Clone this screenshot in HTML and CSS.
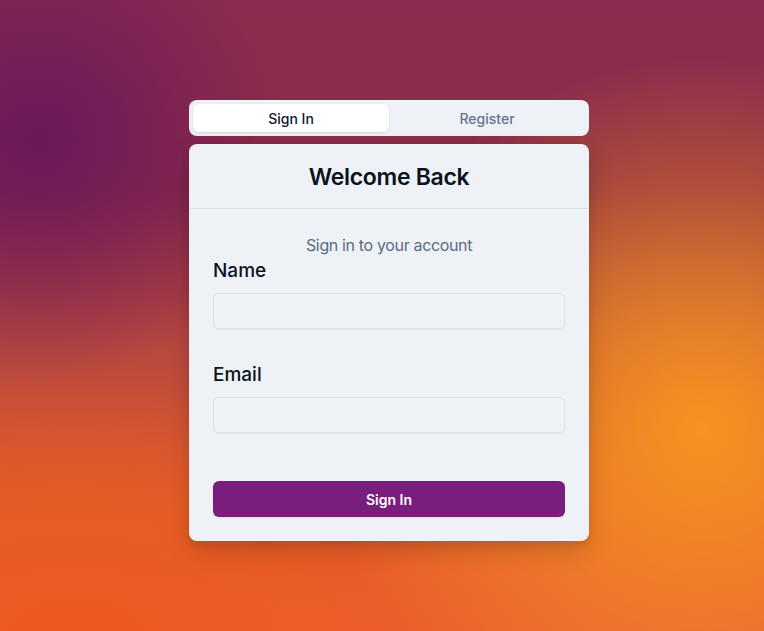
FILE: index.html
```html
<!DOCTYPE html>
<html>
<head>
<meta charset="utf-8">
<link rel="stylesheet" href="styles.css">
</head>
<body>
<div class="page">
  <div class="wrap">
    <div class="tabs">
      <button class="tab active">Sign In</button>
      <button class="tab">Register</button>
    </div>
    <div class="card">
      <div class="card-header">
        <h1 class="title">Welcome Back</h1>
      </div>
      <div class="card-body">
        <p class="subtitle">Sign in to your account</p>
        <div class="field">
          <label class="label">Name</label>
          <input class="input" type="text">
        </div>
        <div class="field field-gap">
          <label class="label">Email</label>
          <input class="input" type="email">
        </div>
        <button class="submit">Sign In</button>
      </div>
    </div>
  </div>
</div>
</body>
</html>
```
FILE: styles.css
```css
* { box-sizing: border-box; }
html, body { margin: 0; padding: 0; height: 100%; }
body {
  font-family: Inter, "Noto Sans", sans-serif;
  background-color: #c2473a;
  background-image:
    radial-gradient(circle at 5% 22%, rgba(104,22,92,0.9) 0%, rgba(104,22,92,0) 28%),
    radial-gradient(circle at 92% 68%, rgba(245,148,32,1) 0%, rgba(245,148,32,0) 45%),
    radial-gradient(ellipse 70% 40% at 10% 100%, rgba(236,90,32,1) 0%, rgba(236,90,32,0) 100%),
    radial-gradient(ellipse 60% 40% at 100% 100%, rgba(232,90,55,1) 0%, rgba(232,90,55,0) 100%),
    linear-gradient(180deg, #8b2d50 0%, #8c2c48 30%, #b8483f 55%, #e05e2c 80%, #eb5e30 100%);
}
.page {
  height: 631px;
  display: flex;
  justify-content: center;
  padding-top: 100px;
  padding-left: 14px;
}
.wrap {
  width: 400px;
  display: flex;
  flex-direction: column;
  gap: 8px;
}
.tabs {
  height: 36px;
  background: #eef2f7;
  border-radius: 8px;
  padding: 4px;
  display: grid;
  grid-template-columns: 1fr 1fr;
}
.tab {
  border: 0;
  background: transparent;
  font-family: inherit;
  font-size: 14px;
  font-weight: 500;
  color: #64748b;
  border-radius: 6px;
  padding: 0;
  height: 28px;
}
.tab.active {
  background: #fff;
  color: #0f172a;
  box-shadow: 0 1px 3px rgba(0,0,0,0.12);
}
.card {
  background: #eef2f7;
  border-radius: 8px;
  box-shadow: 0 10px 25px rgba(0,0,0,0.15), 0 4px 8px rgba(0,0,0,0.08);
}
.card-header {
  height: 65px;
  padding-top: 1px;
  border-bottom: 1px solid #dde3ea;
  display: flex;
  align-items: center;
  justify-content: center;
}
.title {
  margin: 0;
  font-size: 23px;
  line-height: 32px;
  font-weight: 600;
  color: #0b1220;
  letter-spacing: -0.3px;
}
.card-body {
  padding: 24px 24px 24px;
  display: flex;
  flex-direction: column;
}
.subtitle {
  margin: 0;
  text-align: center;
  font-size: 16px;
  line-height: 24px;
  color: #5b6b82;
  letter-spacing: -0.35px;
}
.field {
  display: flex;
  flex-direction: column;
  gap: 8px;
}
.field-gap { margin-top: 32px; }
.label {
  font-size: 19px;
  line-height: 28px;
  font-weight: 500;
  color: #0b1220;
}
.input {
  height: 36px;
  width: 100%;
  background: #eef2f7;
  border: 1px solid #dfe4ea;
  border-radius: 6px;
  box-shadow: 0 1px 2px rgba(0,0,0,0.05);
  font-family: inherit;
  font-size: 14px;
  padding: 0 12px;
}
.submit {
  margin-top: 48px;
  height: 36px;
  border: 0;
  border-radius: 6px;
  background: #7a1e7e;
  color: #fff;
  font-family: inherit;
  font-size: 14px;
  font-weight: 600;
  box-shadow: 0 1px 2px rgba(0,0,0,0.08);
}
```
